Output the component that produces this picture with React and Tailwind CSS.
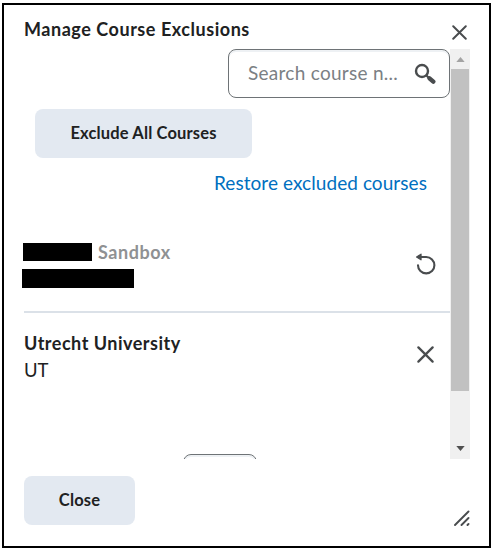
import { useState } from 'react';

const iconStroke = {
  fill: 'none',
  stroke: '#494c4e',
  strokeWidth: 2.1,
  strokeLinecap: 'round',
};

function CloseIcon({ className }) {
  return (
    <svg viewBox="0 0 16 16" className={className} {...iconStroke}>
      <path d="M1.3 1.3 14.7 14.7M14.7 1.3 1.3 14.7" />
    </svg>
  );
}

function SearchIcon() {
  return (
    <svg viewBox="0 0 22 22" className="w-[22px] h-[22px] shrink-0" {...iconStroke}>
      <circle cx="8" cy="8" r="6" strokeWidth="2.4" />
      <path d="M12.5 12.5 15 15" strokeWidth="2.2" />
      <path d="M15.5 15.3 19.3 18.6" strokeWidth="4.4" />
    </svg>
  );
}

function RestoreIcon() {
  return (
    <svg viewBox="0 0 22 22" className="w-[22px] h-[22px]" {...iconStroke}>
      <path d="M5 4H11.2A8.2 8.2 0 1 1 3 12.2" />
      <path d="M1.6 4 6 1.2V6.8Z" fill="#494c4e" strokeWidth="1.3" strokeLinejoin="round" />
    </svg>
  );
}

function Scrollbar() {
  return (
    <div className="w-5 shrink-0 flex flex-col items-center bg-[#f0f0f0]">
      <div className="h-5 flex items-center justify-center">
        <svg viewBox="0 0 10 6" className="w-[9px] h-[5px]">
          <path d="M0 6 5 0 10 6Z" fill="#a3a3a3" />
        </svg>
      </div>
      <div className="w-[18px] h-[322px] bg-[#c1c1c1]" />
      <div className="mt-auto h-[21px] flex items-center justify-center">
        <svg viewBox="0 0 10 6" className="w-[9px] h-[5px]">
          <path d="M0 0 5 6 10 0Z" fill="#505050" />
        </svg>
      </div>
    </div>
  );
}

export default function App() {
  const [query, setQuery] = useState('');

  return (
    <div className="w-[493px] h-[549px] bg-white pl-[2px] pt-[3px] font-['Lato',sans-serif] text-[#202122]">
      <div className="w-[489px] h-[545px] border-2 border-black pl-5 pr-[19px] flex flex-col">
        {/* Title bar */}
        <div className="h-11 shrink-0 flex justify-between">
          <h1 className="mt-[10px] text-[18px] leading-7 font-bold tracking-[0.54px] whitespace-nowrap">
            Manage Course Exclusions
          </h1>
          <button aria-label="Close dialog" className="self-start mt-[20px] mr-[3px]">
            <CloseIcon className="w-[15px] h-[15px]" />
          </button>
        </div>

        {/* Scrolling body */}
        <div className="h-[410px] -ml-1 pl-1 shrink-0 flex overflow-hidden">
          <div className="flex-1 min-w-0 flex flex-col">
            <div className="self-end w-[222px] h-[49px] shrink-0 flex items-center border border-[#6e7376] rounded-lg pl-[19px] pr-[13px] shadow-[inset_0_2px_0_0_#eef1f4]">
              <input
                value={query}
                onChange={(e) => setQuery(e.target.value)}
                placeholder="Search course n..."
                className="flex-1 min-w-0 text-[19px] tracking-[0.28px] placeholder:text-[#7b8084] outline-none"
              />
              <SearchIcon />
            </div>

            <button className="self-start ml-[11px] mt-[11px] w-[217px] h-[49px] shrink-0 rounded-lg bg-[#e3e9f1] text-[16.5px] font-bold tracking-[0.15px]">
              Exclude All Courses
            </button>

            <a href="#" className="self-end mr-[23px] mt-[11px] text-[19px] leading-7 tracking-[0.07px] text-[#006fbf] whitespace-nowrap">
              Restore excluded courses
            </a>

            <div className="mt-[40px] h-[76px] shrink-0 flex justify-between border-b-2 border-[#dbe1e8]">
              <div>
                <div className="h-[27px] pt-[3px] flex items-center text-[18px] font-bold tracking-[0.56px] text-[#8f9193]">
                  <span className="w-[69px] h-[18px] mr-[6px] -ml-px bg-black" />
                  Sandbox
                </div>
                <div className="w-[112px] h-[19px] mt-[5px] -ml-[2px] bg-black" />
              </div>
              <button aria-label="Restore course" className="self-start mt-[16px] mr-[13px]">
                <RestoreIcon />
              </button>
            </div>

            <div className="pt-[17px] h-[141px] shrink-0 flex justify-between">
              <div className="text-[18px] leading-[27px]">
                <p className="font-bold tracking-[0.5px]">Utrecht University</p>
                <p className="text-[18.5px]">UT</p>
              </div>
              <button aria-label="Exclude course" className="self-start mt-[16px] mr-[16px]">
                <CloseIcon className="w-[17px] h-[17px]" />
              </button>
            </div>

            {/* Page size select, cut off by the scroll area */}
            <div className="ml-[159px] w-[74px] h-[40px] shrink-0 border border-[#6e7376] rounded-lg shadow-[inset_0_2px_0_0_#eef1f4]" />
          </div>
          <Scrollbar />
        </div>

        {/* Footer */}
        <div className="flex-1 flex justify-between pt-[17px]">
          <button className="w-[111px] h-[49px] rounded-lg bg-[#e3e9f1] text-[16.5px] font-bold tracking-[0.15px]">
            Close
          </button>
          <svg viewBox="0 0 16 16" className="w-4 h-4 mt-[34px]" {...iconStroke} strokeWidth="1.9">
            <path d="M1 15 14.5 1.5M7.5 15 14.5 8M13.5 15 14.5 14" />
          </svg>
        </div>
      </div>
    </div>
  );
}
